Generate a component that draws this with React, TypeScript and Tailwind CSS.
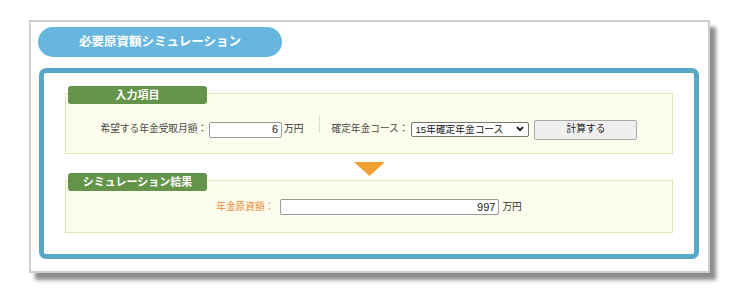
import { useState } from "react"

const FONT = "font-['Liberation_Sans','Noto_Sans_CJK_JP',sans-serif]"

function Legend({ label }: { label: string }) {
    return (
        <div className="absolute left-[2px] top-[-8px] w-[139px] h-[18px] rounded-[3px] bg-[#64944a] text-white font-bold text-[11px] leading-none flex items-center justify-center">
            {label}
        </div>
    )
}

export default function App() {
    const [monthly, setMonthly] = useState("6")
    const [course, setCourse] = useState("15")

    return (
        <main className={`w-[744px] h-[290px] bg-white pt-[20px] pl-[29px] ${FONT}`}>
            <div className="w-[681px] h-[253px] border-2 border-[#cfcfcf] bg-white shadow-[6px_7px_4px_rgba(0,0,0,0.45)] pt-[5px] pl-[7px]">
                <div className="w-[244px] h-[30px] rounded-full bg-[#67b6e0] flex items-center pl-[41px] text-white font-bold text-[12.5px]">
                    必要原資額シミュレーション
                </div>

                <div className="mt-[11px] ml-px w-[660px] h-[191px] border-[5px] border-[#5aa8c7] rounded-[7px] px-[21px]">
                    <div className="relative mt-[20px] h-[61px] border border-[#dce8b2] bg-[#fcfdec]">
                        <Legend label="入力項目" />
                        <div className="flex items-center justify-center pt-[21px] text-[9.7px] text-[#4a4a4a]">
                            <span>希望する年金受取月額：</span>
                            <input
                                type="text"
                                value={monthly}
                                onChange={(e) => setMonthly(e.target.value)}
                                className="ml-[2px] w-[73px] h-[16px] border border-[#9a9a9a] rounded-[2px] bg-white text-right pr-[3px] text-[11px] text-[#222] outline-none"
                            />
                            <span className="ml-[2px] text-[#333]">万円</span>
                            <span className="ml-[16px] mb-[12px] h-[17px] border-l border-dotted border-[#bdbdbd]" />
                            <span className="ml-[11px]">確定年金コース：</span>
                            <div className="relative ml-[3px]">
                                <select
                                    value={course}
                                    onChange={(e) => setCourse(e.target.value)}
                                    className="appearance-none block w-[118px] h-[15px] border border-[#767676] rounded-[2px] bg-white pl-[3px] text-[9.7px] leading-none text-[#111] outline-none"
                                >
                                    <option value="5">5年確定年金コース</option>
                                    <option value="10">10年確定年金コース</option>
                                    <option value="15">15年確定年金コース</option>
                                    <option value="20">20年確定年金コース</option>
                                </select>
                                <svg className="absolute right-[5px] top-[4px] pointer-events-none" width="8" height="6" viewBox="0 0 8 6">
                                    <path d="M1 1.2 L4 4.2 L7 1.2" fill="none" stroke="#111" strokeWidth="1.7" />
                                </svg>
                            </div>
                            <button
                                type="button"
                                className="ml-[5px] w-[103px] h-[20px] border border-[#a8a8a8] rounded-[2px] bg-[#efefef] text-[9.7px] text-[#222]"
                            >
                                計算する
                            </button>
                        </div>
                    </div>

                    <svg className="mx-auto mt-[8px] block" width="31" height="14" viewBox="0 0 31 14">
                        <polygon points="0,0 31,0 15.5,14" fill="#f0a030" />
                    </svg>

                    <div className="relative mt-[4px] h-[53px] border border-[#dce8b2] bg-[#fcfdec]">
                        <Legend label="シミュレーション結果" />
                        <div className="flex items-center justify-center pt-[18px] text-[9.7px]">
                            <span className="text-[#ea8a3a]">年金原資額：</span>
                            <input
                                type="text"
                                value="997"
                                readOnly
                                className="ml-[6px] w-[219px] h-[16px] border border-[#9a9a9a] rounded-[2px] bg-white text-right pr-[3px] text-[11px] text-[#222] outline-none"
                            />
                            <span className="ml-[3px] text-[#333]">万円</span>
                        </div>
                    </div>
                </div>
            </div>
        </main>
    )
}
